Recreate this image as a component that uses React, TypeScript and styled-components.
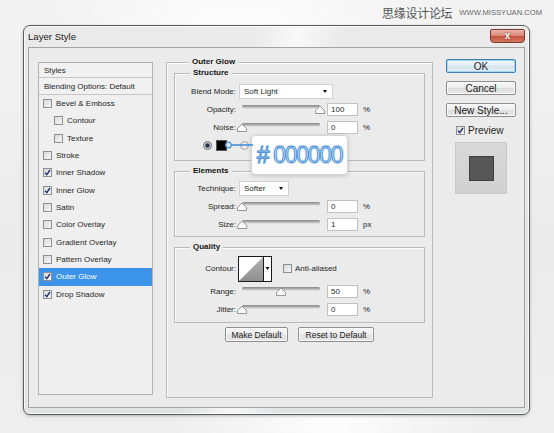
import styled, { createGlobalStyle } from 'styled-components';

const GlobalStyle = createGlobalStyle`
  * { box-sizing: border-box; }
  html, body { margin: 0; padding: 0; }
  body {
    width: 554px;
    height: 433px;
    overflow: hidden;
    font-family: "Liberation Sans", Arial, sans-serif;
    color: #1f1f1f;
    background:
      radial-gradient(ellipse 200px 80px at 240px 30px, rgba(255,255,255,0.95), rgba(255,255,255,0)),
      radial-gradient(ellipse 160px 60px at 330px 425px, rgba(255,255,255,0.9), rgba(255,255,255,0)),
      linear-gradient(180deg, #f3f3f3 0%, #ebebeb 55%, #eeeeee 100%);
  }
`;

const Page = styled.div`
  display: flex;
  flex-direction: column;
  padding-left: 23px;
`;

const Watermark = styled.div`
  height: 25px;
  display: flex;
  align-items: center;
  justify-content: flex-end;
  gap: 7px;
  padding-right: 12px;
  color: #555;
`;

const WatermarkCn = styled.span`
  font-family: "Noto Sans CJK SC", sans-serif;
  font-size: 12px;
  letter-spacing: -0.3px;
`;

const WatermarkUrl = styled.span`
  font-size: 7.6px;
  color: #666;
`;

const Dialog = styled.div`
  width: 507px;
  height: 390px;
  border: 1px solid #5c5c5c;
  border-radius: 7px;
  background:
    linear-gradient(100deg, rgba(255,255,255,0) 40%, rgba(255,255,255,0.7) 48%, rgba(255,255,255,0) 56%),
    linear-gradient(180deg, #eaeaea 0%, #e2e3e4 100%);
  box-shadow: 0 1px 3px rgba(0, 0, 0, 0.25), inset 0 0 0 1px rgba(255, 255, 255, 0.7);
  display: flex;
  flex-direction: column;
`;

const TitleBar = styled.div`
  height: 21px;
  display: flex;
  justify-content: space-between;
  padding-left: 4px;
`;

const Title = styled.span`
  font-size: 9.6px;
  line-height: 22px;
  color: #1a1a1a;
`;

const CloseButton = styled.div`
  width: 35px;
  height: 14px;
  margin: 3px 4px 0 0;
  border: 1px solid #7d3a31;
  border-radius: 2px 2px 4px 4px;
  background: linear-gradient(180deg, #eeb3a8 0%, #dc8b7c 45%, #c6533f 52%, #d47762 100%);
  display: flex;
  align-items: center;
  justify-content: center;
  color: #fff;
  font-size: 10px;
  font-weight: bold;
  line-height: 1;
  text-shadow: 0 0 2px #5a1d15;
`;

const Content = styled.div`
  height: 361px;
  margin: 0 4px;
  border: 1px solid #a3a3a3;
  background: #ebebeb;
  display: flex;
  align-items: flex-start;
  gap: 13px;
  padding: 14px 7px 0 9px;
`;

const StylesPanel = styled.div`
  width: 115px;
  height: 333px;
  border: 1px solid #b2b2b2;
  background: #efefef;
  display: flex;
  flex-direction: column;
  font-size: 8px;
`;

const PanelHeader = styled.div<{ $h: number }>`
  height: ${({ $h }) => $h}px;
  border-bottom: 1px solid #c6c6c6;
  display: flex;
  align-items: center;
  padding-left: 5px;
  background: #f1f1f1;
`;

const StyleItem = styled.div<{ $indent?: boolean; $selected?: boolean }>`
  height: 17.33px;
  display: flex;
  align-items: center;
  gap: 4px;
  padding-left: ${({ $indent }) => ($indent ? 15 : 4)}px;
  background: ${({ $selected }) => ($selected ? '#3b93ea' : 'transparent')};
  color: ${({ $selected }) => ($selected ? '#ffffff' : '#1f1f1f')};
`;

const Box = styled.span`
  width: 9px;
  height: 9px;
  flex-shrink: 0;
  border: 1px solid #8f9091;
  background: linear-gradient(135deg, #d9d9d9 0%, #f7f7f7 100%);
  display: flex;
  align-items: center;
  justify-content: center;
`;

const MainGroup = styled.div`
  width: 267px;
  height: 336px;
  border: 1px solid #bababa;
  box-shadow: inset 1px 1px 0 #fafafa;
  padding: 0 7px;
  display: flex;
  flex-direction: column;
`;

const Legend = styled.div`
  align-self: flex-start;
  margin: -6px 0 0 15px;
  padding: 0 3px;
  background: #ebebeb;
  font-size: 8px;
  font-weight: bold;
  line-height: 10px;
  color: #151515;
`;

const Group = styled.div<{ $mt: number; $pb: number }>`
  margin-top: ${({ $mt }) => $mt}px;
  border: 1px solid #bababa;
  box-shadow: inset 1px 1px 0 #fafafa;
  padding-bottom: ${({ $pb }) => $pb}px;
  display: flex;
  flex-direction: column;
  position: relative;
`;

const Rows = styled.div<{ $mt: number }>`
  margin-top: ${({ $mt }) => $mt}px;
  display: flex;
  flex-direction: column;
`;

const Row = styled.div<{ $h?: number }>`
  height: ${({ $h }) => $h ?? 18}px;
  display: flex;
  align-items: center;
  font-size: 8px;
  position: relative;
`;

const ColorRow = styled(Row)`
  padding-left: 28px;
`;

const Label = styled.span`
  width: 61px;
  flex-shrink: 0;
  text-align: right;
`;

const Select = styled.div<{ $w: number }>`
  width: ${({ $w }) => $w}px;
  height: 15px;
  margin-left: 3px;
  background: #fff;
  border: 1px solid #d0d0d0;
  display: flex;
  align-items: center;
  justify-content: space-between;
  padding: 0 5px 0 4px;
`;

const Arrow = styled.span`
  width: 0;
  height: 0;
  border-left: 2.5px solid transparent;
  border-right: 2.5px solid transparent;
  border-top: 3px solid #111;
`;

const SliderWrap = styled.div`
  margin-left: 6px;
  width: 78px;
  height: 12px;
  display: flex;
`;

const NumInput = styled.div`
  width: 31px;
  height: 13px;
  margin-left: 7px;
  background: #fff;
  border: 1px solid #c2c2c2;
  padding-left: 3px;
  display: flex;
  align-items: center;
`;

const Unit = styled.span`
  margin-left: 5px;
`;

const Radio = styled.span<{ $on?: boolean; $ml?: number }>`
  width: 9px;
  height: 9px;
  border-radius: 50%;
  flex-shrink: 0;
  margin-left: ${({ $ml }) => $ml ?? 0}px;
  border: 1px solid ${({ $on }) => ($on ? '#6b6f74' : '#a7a7a7')};
  background: ${({ $on }) =>
    $on
      ? 'radial-gradient(circle at 50% 50%, #2b3440 0, #2b3440 1.8px, #c9cfd6 2.6px, #eef0f2 100%)'
      : 'radial-gradient(circle at 50% 50%, #f6f6f6 0, #dedede 100%)'};
`;

const Swatch = styled.span`
  width: 11px;
  height: 11px;
  margin-left: 4px;
  background: #000;
  border: 1px solid #555;
`;

const Connector = styled.svg`
  position: absolute;
  left: 50px;
  top: 4px;
  z-index: 3;
`;

const Callout = styled.div`
  position: absolute;
  left: 76px;
  top: -1px;
  width: 97px;
  height: 40px;
  z-index: 2;
  background: #fff;
  border: 1px solid #d6d6d6;
  border-radius: 4px;
  box-shadow: 0 1px 4px rgba(0, 0, 0, 0.18);
  display: flex;
  align-items: center;
  justify-content: center;
  gap: 5px;
  font-size: 23px;
  letter-spacing: -1.3px;
  color: #bcdcf8;
  -webkit-text-stroke: 0.8px #3b88d4;
  text-shadow: 0 0 2px rgba(74, 148, 216, 0.4);
`;

const ContourBox = styled.svg`
  margin-left: 2px;
`;

const AntiAlias = styled.div`
  margin-left: 11px;
  display: flex;
  align-items: center;
  gap: 3px;
`;

const FooterButtons = styled.div`
  margin-top: 4px;
  display: flex;
  justify-content: center;
  gap: 10px;
`;

const Button = styled.div<{ $w: number; $h?: number; $fs?: number; $default?: boolean }>`
  width: ${({ $w }) => $w}px;
  height: ${({ $h }) => $h ?? 15}px;
  border: 1px solid ${({ $default }) => ($default ? '#3c7fb1' : '#8e8e8e')};
  border-radius: 2px;
  background: ${({ $default }) =>
    $default
      ? 'linear-gradient(180deg, #f2f7fa 0%, #e3eef5 50%, #d2e4ef 51%, #e4eef4 100%)'
      : 'linear-gradient(180deg, #f8f8f8 0%, #ececec 50%, #dedede 51%, #e9e9e9 100%)'};
  box-shadow: ${({ $default }) => ($default ? 'inset 0 0 0 1px #a6d6f2' : 'inset 0 0 0 1px #fbfbfb')};
  display: flex;
  align-items: center;
  justify-content: center;
  font-size: ${({ $fs }) => $fs ?? 8.5}px;
  color: #1a1a1a;
`;

const RightColumn = styled.div`
  width: 70px;
  margin-top: -3px;
  display: flex;
  flex-direction: column;
  gap: 8px;
`;

const PreviewToggle = styled.div`
  margin: 0 0 0 10px;
  display: flex;
  align-items: center;
  gap: 3px;
  font-size: 10px;
`;

const PreviewBox = styled.div`
  width: 52px;
  height: 52px;
  margin: -2px 0 0 9px;
  background: linear-gradient(180deg, #d9d9d9 0%, #d0d0d0 100%);
  border: 1px solid #cacaca;
  display: flex;
  align-items: center;
  justify-content: center;
`;

const PreviewSquare = styled.div`
  width: 25px;
  height: 25px;
  background: #575757;
  border: 1px solid #3e3e3e;
`;

function Checkbox({ checked }: { checked?: boolean }) {
  return (
    <Box>
      {checked && (
        <svg width="7" height="7" viewBox="0 0 7 7">
          <path d="M1 3.6 L2.8 5.6 L6 1" fill="none" stroke="#1c2f6b" strokeWidth="1.4" />
        </svg>
      )}
    </Box>
  );
}

function Slider({ value }: { value: number }) {
  const p = (value / 100) * 78;
  return (
    <SliderWrap>
      <svg width="78" height="12" style={{ overflow: 'visible' }}>
        <defs>
          <linearGradient id="track" x1="0" y1="0" x2="0" y2="1">
            <stop offset="0" stopColor="#858585" />
            <stop offset="1" stopColor="#d6d6d6" />
          </linearGradient>
        </defs>
        <rect x="0" y="2" width="78" height="3.5" rx="1.5" fill="url(#track)" />
        <path
          d={`M${p - 4.5} 10.5 L${p - 4.5} 7.5 L${p} 3 L${p + 4.5} 7.5 L${p + 4.5} 10.5 Z`}
          fill="#fbfbfb"
          stroke="#8a8a8a"
          strokeWidth="0.9"
        />
      </svg>
    </SliderWrap>
  );
}

function SliderRow({ label, value, shown, unit }: { label: string; value: number; shown: string; unit: string }) {
  return (
    <Row>
      <Label>{label}</Label>
      <Slider value={value} />
      <NumInput>{shown}</NumInput>
      <Unit>{unit}</Unit>
    </Row>
  );
}

const styleItems = [
  { label: 'Bevel & Emboss' },
  { label: 'Contour', indent: true },
  { label: 'Texture', indent: true },
  { label: 'Stroke' },
  { label: 'Inner Shadow', checked: true },
  { label: 'Inner Glow', checked: true },
  { label: 'Satin' },
  { label: 'Color Overlay' },
  { label: 'Gradient Overlay' },
  { label: 'Pattern Overlay' },
  { label: 'Outer Glow', checked: true, selected: true },
  { label: 'Drop Shadow', checked: true },
];

export default function App() {
  return (
    <>
      <GlobalStyle />
      <Page>
        <Watermark>
          <WatermarkCn>思缘设计论坛</WatermarkCn>
          <WatermarkUrl>WWW.MISSYUAN.COM</WatermarkUrl>
        </Watermark>
        <Dialog>
          <TitleBar>
            <Title>Layer Style</Title>
            <CloseButton>x</CloseButton>
          </TitleBar>
          <Content>
            <StylesPanel>
              <PanelHeader $h={15}>Styles</PanelHeader>
              <PanelHeader $h={17}>Blending Options: Default</PanelHeader>
              {styleItems.map(({ label, indent, checked, selected }) => (
                <StyleItem key={label} $indent={indent} $selected={selected}>
                  <Checkbox checked={checked} />
                  {label}
                </StyleItem>
              ))}
            </StylesPanel>

            <MainGroup>
              <Legend>Outer Glow</Legend>

              <Group $mt={6} $pb={6}>
                <Legend>Structure</Legend>
                <Rows $mt={4}>
                  <Row>
                    <Label>Blend Mode:</Label>
                    <Select $w={94}>
                      Soft Light
                      <Arrow />
                    </Select>
                  </Row>
                  <SliderRow label="Opacity:" value={100} shown="100" unit="%" />
                  <SliderRow label="Noise:" value={0} shown="0" unit="%" />
                  <ColorRow>
                    <Radio $on />
                    <Swatch />
                    <Radio $ml={13} />
                    <Connector width="28" height="10">
                      <line x1="6" y1="5" x2="28" y2="5" stroke="#3f8fdc" strokeWidth="1.6" />
                      <circle cx="3.5" cy="5" r="2.8" fill="#d3e8fb" stroke="#3f8fdc" strokeWidth="1.2" />
                    </Connector>
                    <Callout>
                      <span>#</span>
                      <span>000000</span>
                    </Callout>
                  </ColorRow>
                </Rows>
              </Group>

              <Group $mt={10} $pb={3}>
                <Legend>Elements</Legend>
                <Rows $mt={3}>
                  <Row>
                    <Label>Technique:</Label>
                    <Select $w={50}>
                      Softer
                      <Arrow />
                    </Select>
                  </Row>
                  <SliderRow label="Spread:" value={0} shown="0" unit="%" />
                  <SliderRow label="Size:" value={0.3} shown="1" unit="px" />
                </Rows>
              </Group>

              <Group $mt={10} $pb={4}>
                <Legend>Quality</Legend>
                <Rows $mt={3}>
                  <Row $h={27}>
                    <Label>Contour:</Label>
                    <ContourBox width="34" height="26" viewBox="0 0 34 26">
                      <defs>
                        <linearGradient id="contour" x1="0" y1="0" x2="0" y2="1">
                          <stop offset="0" stopColor="#b4b4b4" />
                          <stop offset="1" stopColor="#8e8e8e" />
                        </linearGradient>
                      </defs>
                      <rect x="0.5" y="0.5" width="33" height="25" fill="#fff" stroke="#1a1a1a" />
                      <polygon points="1,25 25,1 25,25" fill="url(#contour)" />
                      <line x1="25.5" y1="1" x2="25.5" y2="25" stroke="#1a1a1a" />
                      <polygon points="27.5,11 31.5,11 29.5,14" fill="#111" />
                    </ContourBox>
                    <AntiAlias>
                      <Checkbox />
                      Anti-aliased
                    </AntiAlias>
                  </Row>
                  <SliderRow label="Range:" value={50} shown="50" unit="%" />
                  <SliderRow label="Jitter:" value={0} shown="0" unit="%" />
                </Rows>
              </Group>

              <FooterButtons>
                <Button $w={63}>Make Default</Button>
                <Button $w={76}>Reset to Default</Button>
              </FooterButtons>
            </MainGroup>

            <RightColumn>
              <Button $w={70} $h={14} $fs={10} $default>OK</Button>
              <Button $w={70} $h={14} $fs={10}>Cancel</Button>
              <Button $w={70} $h={14} $fs={10}>New Style...</Button>
              <PreviewToggle>
                <Checkbox checked />
                Preview
              </PreviewToggle>
              <PreviewBox>
                <PreviewSquare />
              </PreviewBox>
            </RightColumn>
          </Content>
        </Dialog>
      </Page>
    </>
  );
}
